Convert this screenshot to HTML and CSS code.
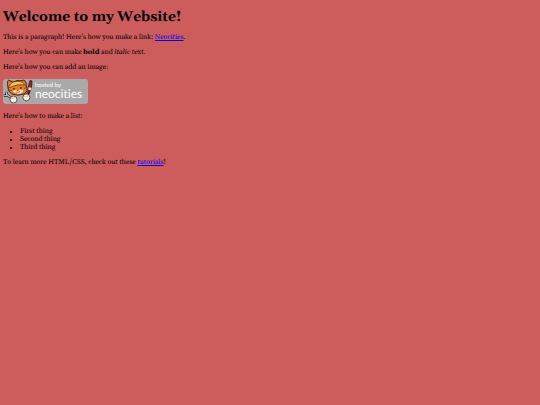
FILE: index.html
```html
<!DOCTYPE html>
<html lang="en">
<head>
<meta charset="utf-8">
<meta name="viewport" content="width=device-width, initial-scale=1">
<title>Welcome to my Website!</title>
<link rel="stylesheet" href="styles.css">
</head>
<body>
<h1>Welcome to my Website!</h1>
<p>This is a paragraph! Here's how you make a link: <a href="#neocities">Neocities</a>.</p>
<p>Here's how you can make <strong>bold</strong> and <em>italic</em> text.</p>
<p>Here's how you can add an image:</p>
<p>
<svg class="badge" viewBox="0 0 85 27" role="img" aria-label="Hosted by Neocities">
  <rect x="0" y="0" width="85" height="25" rx="3" fill="#aaa9a9"/>
  <!-- Brush -->
  <path d="M23 19L27 10" stroke="#302024" stroke-width="3"/>
  <path d="M25.4 7L27 1.5L29 2L28.5 8L27 12L25 11Z" fill="#a51f24" stroke="#32191b" stroke-width=".8"/>
  <path d="M25.7 8.2L28.5 8.8L27.6 11.6L25.2 10.8Z" fill="#efe1bc"/>
  <path d="M24 15L25.5 11.5" stroke="#a83b28" stroke-width="1.2"/>
  <!-- Wrench -->
  <path d="M10 20L3.5 15.5M4 16.5L.8 16.8M4 16.2L3 12.8" fill="none" stroke="#27242a" stroke-width="2.6"/>
  <path d="M10 20L3.5 15.5M4 16.5L.8 16.8M4 16.2L3 12.8" fill="none" stroke="#c3cbd1" stroke-width="1.1"/>
  <!-- Cat -->
  <path d="M5 8C4 4 4.5 1.5 5.5 1.2L10 3Q14 .8 18 1.8L21 1Q24 3 23.2 7Q26 12 21 15Q15 17.5 8.5 14.8Q4 12 5 8Z" fill="#e97a25" stroke="#40211c"/>
  <path d="M6.5 7Q8 2.5 14 2.4Q20 2 21.5 6Q14 4.6 8 8L5 8.5Z" fill="#f4c64c" stroke="#593019" stroke-width=".7"/>
  <path d="M9.5 12Q12 10.5 14.5 11.5Q18 10 20 11Q21 13 17.5 14.5Q12 15.5 9.5 12Z" fill="#ffe3b8"/>
  <circle cx="11" cy="9.8" r=".9" fill="#302024"/>
  <circle cx="18" cy="9" r=".9" fill="#302024"/>
  <path d="M13.8 11.2L15.7 11L14.8 12.2Z" fill="#6c2925"/>
  <path d="M12.5 12.9Q14.5 14.3 17 12.5" fill="none" stroke="#a94432" stroke-width=".8"/>
  <path d="M6 11L9 11.8M21 9.5L23.5 8.5" stroke="#693020" stroke-width=".7"/>
  <circle cx="10.5" cy="20.5" r="3.5" fill="#fff1dc" stroke="#48302c" stroke-width=".8"/>
  <circle cx="23.4" cy="18.4" r="3.5" fill="#fff1dc" stroke="#48302c" stroke-width=".8"/>
  <path d="M9.3 18.6L9 20M11.3 18.5L11.1 20M22.2 16.8L22 18.2M24.2 16.5L24 18" stroke="#795447" stroke-width=".5"/>
  <text class="badge-small" x="32" y="8">hosted by</text>
  <text class="badge-name" x="32" y="19">neocities</text>
</svg>
</p>
<p>Here's how to make a list:</p>
<ul>
  <li>First thing</li>
  <li>Second thing</li>
  <li>Third thing</li>
</ul>
<p>To learn more HTML/CSS, check out these <a href="#tutorials">tutorials</a>!</p>
</body>
</html>
```

FILE: styles.css
```css
body {
  margin: 9px 3px;
  background: #cd5c5c;
  color: #000;
  font: 7px/8px Georgia, Gelasio, "Liberation Serif", serif;
  text-rendering: geometricPrecision;
}

h1 {
  margin: 0 0 8px;
  font-size: 14px;
  line-height: 17px;
}

p,
ul {
  margin: 7px 0;
}

ul {
  padding-left: 17px;
}

a {
  color: #0000ee;
}

.badge {
  display: block;
  width: 85px;
  height: 27px;
}

.badge-small,
.badge-name {
  fill: #fff;
  font-family: Lato, "Noto Sans", sans-serif;
  font-variant-ligatures: none;
}

.badge-small {
  font-size: 6px;
}

.badge-name {
  font-size: 12px;
}
```
